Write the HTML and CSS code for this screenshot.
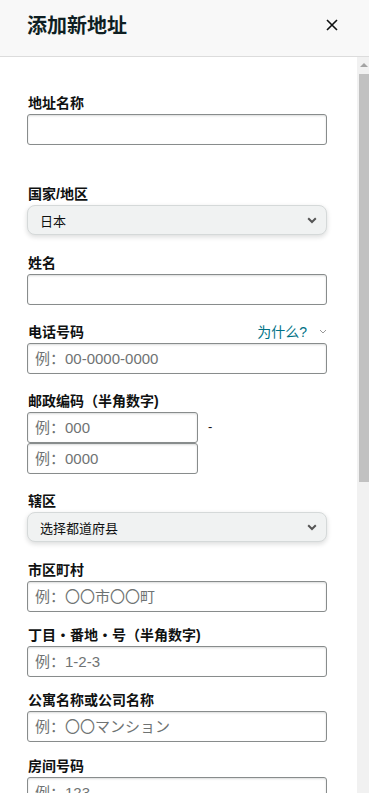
FILE: index.html
```html
<!DOCTYPE html>
<html lang="zh">
<head>
<meta charset="utf-8">
<title>添加新地址</title>
<link rel="stylesheet" href="styles.css">
</head>
<body>
<div class="modal">
  <header class="modal-header">
    <h1 class="modal-title">添加新地址</h1>
    <button class="close-btn" aria-label="关闭">
      <svg width="12" height="12" viewBox="0 0 12 12"><path d="M1 1L11 11M11 1L1 11" stroke="#0f1111" stroke-width="1.6" fill="none"/></svg>
    </button>
  </header>
  <div class="modal-body">
    <div class="content">
      <div class="field field-first">
        <label class="label">地址名称</label>
        <input class="input" type="text">
      </div>
      <div class="field field-select">
        <label class="label">国家/地区</label>
        <div class="select"><span>日本</span><svg class="chev" width="10" height="7" viewBox="0 0 10 7"><path d="M1.2 1.3L5 5L8.8 1.3" stroke="#555" stroke-width="2" fill="none"/></svg></div>
      </div>
      <div class="field">
        <label class="label">姓名</label>
        <input class="input" type="text">
      </div>
      <div class="field">
        <div class="label-row">
          <label class="label">电话号码</label>
          <span class="why">为什么?<svg class="why-chev" width="8" height="5" viewBox="0 0 8 5"><path d="M1 1L4 4L7 1" stroke="#999" stroke-width="1" fill="none"/></svg></span>
        </div>
        <input class="input" type="text" placeholder="例：00-0000-0000">
      </div>
      <div class="field">
        <label class="label">邮政编码（半角数字)</label>
        <div class="zip-row">
          <input class="input zip" type="text" placeholder="例：000">
          <span class="dash">-</span>
        </div>
        <input class="input zip" type="text" placeholder="例：0000">
      </div>
      <div class="field field-select">
        <label class="label">辖区</label>
        <div class="select"><span>选择都道府县</span><svg class="chev" width="10" height="7" viewBox="0 0 10 7"><path d="M1.2 1.3L5 5L8.8 1.3" stroke="#555" stroke-width="2" fill="none"/></svg></div>
      </div>
      <div class="field field-tight">
        <label class="label">市区町村</label>
        <input class="input" type="text" placeholder="例：〇〇市〇〇町">
      </div>
      <div class="field field-tight">
        <label class="label">丁目・番地・号（半角数字)</label>
        <input class="input" type="text" placeholder="例：1-2-3">
      </div>
      <div class="field field-room">
        <label class="label">公寓名称或公司名称</label>
        <input class="input" type="text" placeholder="例：〇〇マンション">
      </div>
      <div class="field">
        <label class="label">房间号码</label>
        <input class="input" type="text" placeholder="例：123">
      </div>
    </div>
    <div class="scrollbar">
      <div class="sb-btn"><span class="sb-arrow"></span></div>
      <div class="sb-thumb"></div>
    </div>
  </div>
</div>
</body>
</html>
```
FILE: styles.css
```css
* { box-sizing: border-box; }
html, body {
  margin: 0;
  padding: 0;
  width: 369px;
  height: 793px;
  overflow: hidden;
  background: #ffffff;
  font-family: "Liberation Sans", "Noto Sans CJK SC", sans-serif;
  color: #0f1111;
}
.modal {
  width: 369px;
  height: 793px;
  display: flex;
  flex-direction: column;
}
.modal-header {
  height: 57px;
  flex: none;
  background: #f8f8f8;
  border-bottom: 1px solid #dcdcdc;
  display: flex;
  align-items: center;
  justify-content: space-between;
  padding: 0 31px 4px 27px;
}
.modal-title {
  margin: 0;
  font-size: 20px;
  font-weight: 700;
  line-height: 24px;
  color: #0f1f23;
}
.close-btn {
  border: 0;
  background: transparent;
  padding: 0;
  width: 12px;
  height: 12px;
  display: flex;
  margin-top: -2px;
}
.modal-body {
  flex: 1;
  display: flex;
  min-height: 0;
}
.content {
  flex: 1;
  overflow: hidden;
  padding: 37px 30px 0 27px;
}
.field {
  margin-bottom: 18px;
}
.field-first { margin-bottom: 40px; }
.field-select { margin-bottom: 19px; }
.field-tight { margin-bottom: 14px; }
.field-room { margin-bottom: 15px; }
.label {
  display: block;
  font-size: 14px;
  font-weight: 700;
  line-height: 19px;
  padding: 0 0 1px 1px;
  color: #0f1111;
}
.label-row {
  display: flex;
  align-items: flex-start;
  justify-content: space-between;
}
.why {
  display: flex;
  align-items: center;
  font-size: 14px;
  line-height: 19px;
  color: #007185;
}
.why-chev { margin-left: 12px; margin-top: -3px; }
.input {
  display: block;
  width: 300px;
  height: 31px;
  margin: 0;
  border: 1px solid #888c8c;
  border-radius: 3px;
  box-shadow: inset 0 1px 2px rgba(15,17,17,.15);
  padding: 0 7px;
  font-family: "Liberation Sans", "Noto Sans CJK SC", sans-serif;
  font-size: 15px;
  color: #0f1111;
  background: #fff;
}
.input::placeholder { color: #6f7373; }
.zip { width: 171px; }
.zip-row {
  display: flex;
  align-items: center;
}
.dash {
  margin-left: 10px;
  font-size: 13px;
  line-height: 19px;
  margin-top: -2px;
}
.select {
  width: 300px;
  height: 30px;
  border: 1px solid #d5d9d9;
  border-radius: 8px;
  background: #f0f2f2;
  box-shadow: 0 2px 5px 0 rgba(15,17,17,.15);
  display: flex;
  align-items: center;
  justify-content: space-between;
  padding: 0 9px 0 12px;
  font-size: 13px;
}
.chev { display: block; }
.scrollbar {
  width: 12px;
  flex: none;
  background: #f1f1f1;
  display: flex;
  flex-direction: column;
}
.sb-btn {
  height: 17px;
  padding: 6px 0 0 3px;
}
.sb-arrow {
  display: block;
  width: 0;
  height: 0;
  border-left: 4px solid transparent;
  border-right: 4px solid transparent;
  border-bottom: 4px solid #a3a3a3;
}
.sb-thumb {
  height: 408px;
  margin-left: 2px;
  background: #c1c1c1;
}
```
